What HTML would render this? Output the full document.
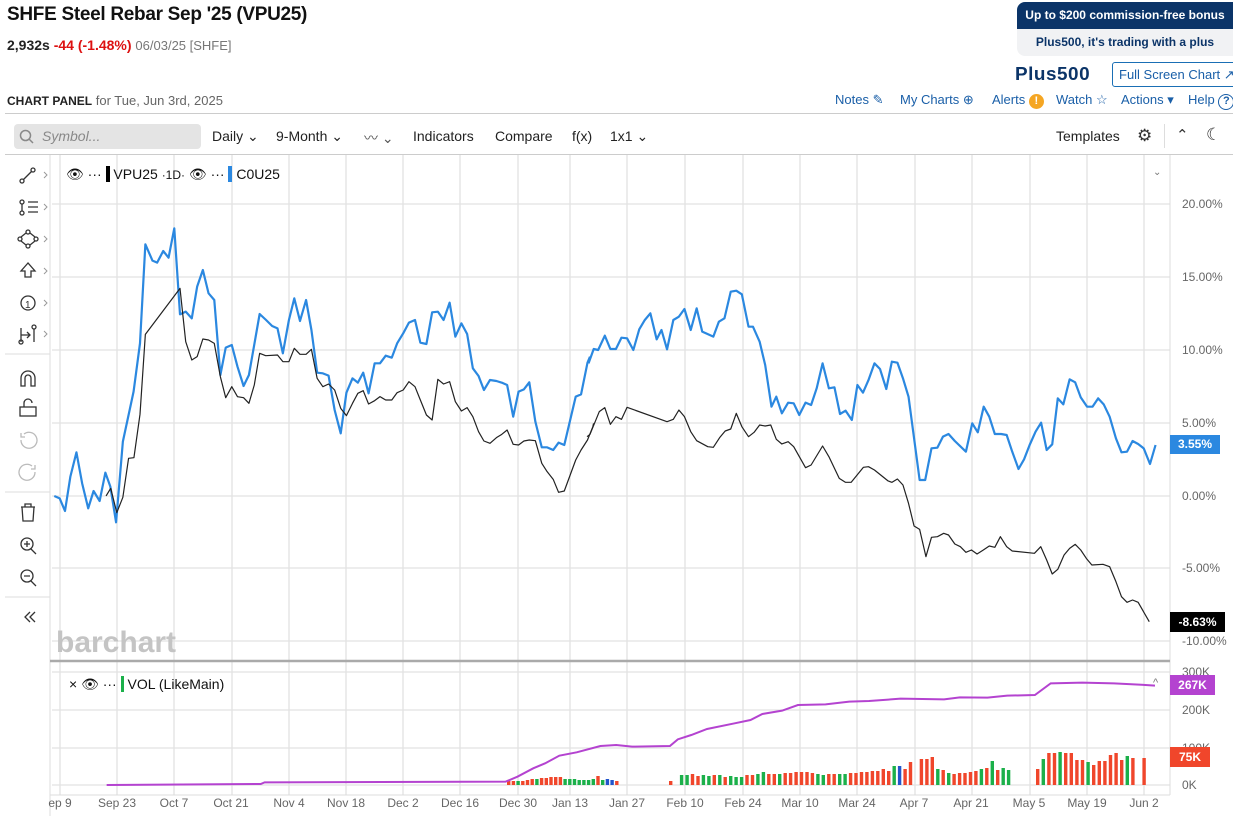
<!DOCTYPE html>
<html><head><meta charset="utf-8">
<style>
*{margin:0;padding:0;box-sizing:border-box}
body{width:1233px;height:816px;overflow:hidden;background:#fff;font-family:"Liberation Sans",Arial,sans-serif;color:#222;position:relative}
.a{position:absolute;white-space:nowrap}
.blue{color:#1a5fa8;font-size:13px;top:92px}
.ax{position:absolute;left:1182px;font-size:12px;color:#666}
.dl{position:absolute;top:796px;font-size:12px;color:#666;transform:translateX(-50%)}
</style></head><body>
<div class="a" style="left:7px;top:4px;font-size:19px;font-weight:bold;color:#111;letter-spacing:-0.3px">SHFE Steel Rebar Sep '25 (VPU25)</div>
<div class="a" style="left:7px;top:37px;font-size:14px"><b>2,932s</b> <b style="color:#d11">-44 (-1.48%)</b> <span style="color:#777;font-size:13px">06/03/25 [SHFE]</span></div>

<div class="a" style="left:1017px;top:2px;width:216px;height:27px;background:#0b3468;border-radius:8px 0 0 0;color:#fff;font-size:12px;font-weight:bold;text-align:center;line-height:27px">Up to $200 commission-free bonus</div>
<div class="a" style="left:1017px;top:29px;width:216px;height:27px;background:#f1f2f4;border-radius:0 0 0 8px;color:#0b3468;font-size:12px;font-weight:bold;text-align:center;line-height:27px">Plus500, it's trading with a plus</div>
<div class="a" style="left:1015px;top:64px;font-size:18px;font-weight:900;color:#0b3468;letter-spacing:0.5px;transform:scaleX(1.05);transform-origin:left">Plus500</div>
<div class="a" style="left:1112px;top:62px;width:125px;height:25px;border:1px solid #1a6fb5;border-radius:3px;color:#1a5fa8;font-size:13px;line-height:23px;padding-left:6px">Full Screen Chart ↗</div>

<div class="a" style="left:7px;top:93px;font-size:13px"><b style="font-size:12px">CHART PANEL</b> <span style="color:#666">for Tue, Jun 3rd, 2025</span></div>
<div class="a blue" style="left:835px">Notes ✎</div>
<div class="a blue" style="left:900px">My Charts ⊕</div>
<div class="a blue" style="left:992px">Alerts <span style="display:inline-block;width:15px;height:15px;border-radius:50%;background:#f5a623;color:#fff;font-size:11px;text-align:center;line-height:15px;font-weight:bold">!</span></div>
<div class="a blue" style="left:1056px">Watch ☆</div>
<div class="a blue" style="left:1121px">Actions ▾</div>
<div class="a blue" style="left:1188px">Help <span style="display:inline-block;width:16px;height:16px;border:1.5px solid #1a5fa8;border-radius:50%;font-size:11px;text-align:center;line-height:13px;font-weight:bold">?</span></div>
<div class="a" style="left:5px;top:113px;width:1228px;height:1px;background:#ccc"></div>

<div class="a" style="left:14px;top:124px;width:187px;height:25px;background:#e4e4e4;border-radius:4px;font-size:14px;color:#888;font-style:italic;line-height:25px;padding-left:28px">Symbol...</div>
<svg class="a" style="left:19px;top:129px" width="16" height="16"><circle cx="6.5" cy="6.5" r="5" fill="none" stroke="#888" stroke-width="1.5"/><line x1="10" y1="10" x2="14" y2="14" stroke="#888" stroke-width="1.5"/></svg>
<div class="a" style="left:212px;top:128px;font-size:14px;color:#222">Daily ⌄</div>
<div class="a" style="left:276px;top:128px;font-size:14px;color:#222">9-Month ⌄</div>
<div class="a" style="left:364px;top:128px;font-size:14px;color:#555">〰 ⌄</div>
<div class="a" style="left:413px;top:128px;font-size:14px;color:#222">Indicators</div>
<div class="a" style="left:495px;top:128px;font-size:14px;color:#222">Compare</div>
<div class="a" style="left:572px;top:128px;font-size:14px;color:#222">f(x)</div>
<div class="a" style="left:610px;top:128px;font-size:14px;color:#222">1x1 ⌄</div>
<div class="a" style="left:1056px;top:128px;font-size:14px">Templates</div>
<div class="a" style="left:1137px;top:126px;font-size:17px;color:#333">⚙</div>
<div class="a" style="left:1164px;top:124px;width:1px;height:24px;background:#ddd"></div>
<div class="a" style="left:1176px;top:126px;font-size:15px;color:#333">⌃</div>
<div class="a" style="left:1206px;top:125px;font-size:17px;color:#333">☾</div>
<div class="a" style="left:5px;top:154px;width:1228px;height:1px;background:#ccc"></div>

<svg class="a" style="left:0;top:0" width="1233" height="816">
<g stroke="#e2e2e2" stroke-width="1.3">
<line x1="60" y1="155" x2="60" y2="795"/><line x1="117" y1="155" x2="117" y2="795"/><line x1="174" y1="155" x2="174" y2="795"/><line x1="232" y1="155" x2="232" y2="795"/><line x1="289" y1="155" x2="289" y2="795"/><line x1="346" y1="155" x2="346" y2="795"/><line x1="403" y1="155" x2="403" y2="795"/><line x1="460" y1="155" x2="460" y2="795"/><line x1="518" y1="155" x2="518" y2="795"/><line x1="570" y1="155" x2="570" y2="795"/><line x1="627" y1="155" x2="627" y2="795"/><line x1="685" y1="155" x2="685" y2="795"/><line x1="743" y1="155" x2="743" y2="795"/><line x1="800" y1="155" x2="800" y2="795"/><line x1="857" y1="155" x2="857" y2="795"/><line x1="915" y1="155" x2="915" y2="795"/><line x1="972" y1="155" x2="972" y2="795"/><line x1="1030" y1="155" x2="1030" y2="795"/><line x1="1087" y1="155" x2="1087" y2="795"/><line x1="1144" y1="155" x2="1144" y2="795"/>
<line x1="52" y1="204" x2="1170" y2="204"/><line x1="52" y1="277" x2="1170" y2="277"/><line x1="52" y1="350" x2="1170" y2="350"/><line x1="52" y1="423" x2="1170" y2="423"/><line x1="52" y1="496" x2="1170" y2="496"/><line x1="52" y1="568" x2="1170" y2="568"/><line x1="52" y1="641" x2="1170" y2="641"/>
<line x1="52" y1="672" x2="1170" y2="672"/><line x1="52" y1="710" x2="1170" y2="710"/><line x1="52" y1="748" x2="1170" y2="748"/><line x1="52" y1="785" x2="1170" y2="785"/>
</g>
<line x1="1170" y1="155" x2="1170" y2="795" stroke="#ddd"/>
<line x1="50" y1="155" x2="50" y2="816" stroke="#ddd"/>
<line x1="50" y1="661" x2="1170" y2="661" stroke="#aaa" stroke-width="2.5"/>
<line x1="50" y1="795" x2="1170" y2="795" stroke="#ddd"/>
<g stroke="#ddd"><line x1="5" y1="354" x2="50" y2="354"/><line x1="5" y1="492" x2="50" y2="492"/><line x1="5" y1="597" x2="50" y2="597"/></g>
<text x="56" y="652" font-family="Liberation Sans" font-size="30" font-weight="bold" fill="#c4c4c4">barchart</text>

<g fill="none" stroke-linejoin="round">
<g transform="translate(40,210) scale(0.35714,0.33333)">
<polyline vector-effect="non-scaling-stroke" stroke="#2b88e0" stroke-width="2.2" points="40,858 55,865 70,903 85,800 102,727 118,820 135,895 150,843 167,873 183,788 197,830 213,937 232,695 262,545 280,400 295,103 315,152 328,158 345,123 360,143 376,55 392,313 408,305 425,325 440,230 456,180 472,250 488,270 505,495 520,413 537,405 553,470 570,528 585,495 615,312 633,330 650,348 665,355 680,430 697,330 712,265 728,333 745,270 760,360 776,488 792,490 808,497 825,600 842,670 858,548 875,505 890,518 905,488 920,550 937,460 952,460 968,437 985,443 1000,400 1017,370 1033,338 1050,330 1065,398 1082,402 1098,307 1114,305 1130,330 1147,278 1163,380 1180,340 1196,372 1212,475 1228,498 1243,540 1260,510 1278,513 1293,518 1308,525 1325,620 1340,545 1355,538 1370,517 1387,635 1405,712 1420,712 1437,720 1452,698 1468,705 1500,560 1515,553 1533,458 1540,440"/>
<polyline vector-effect="non-scaling-stroke" stroke="#222" stroke-width="1.2" points="185,858 198,835 215,908 232,862 248,745 263,743 280,613 295,373 392,235 408,395 425,450 440,440 456,387 472,390 488,400 505,500 520,563 537,530 553,560 570,563 585,580 600,525 615,430 632,437 665,435 680,455 697,455 712,415 728,433 745,433 760,418 776,505 792,530 808,522 825,540 842,595 858,617 875,580 890,550 905,542 920,582 937,572 952,560 968,570 985,570 1000,548 1017,540 1033,515 1050,530 1065,570 1082,615 1098,630 1114,508 1130,522 1147,515 1163,575 1180,603 1196,593 1212,620 1228,665 1243,693 1260,700 1278,683 1293,673 1308,660 1325,703 1340,705 1355,693 1370,690 1387,692 1405,760 1420,785 1437,808 1452,847 1468,843 1500,750 1515,720 1533,690 1548,650 1550,640"/>
</g>
<g transform="translate(590,270) scale(0.37037,0.33333)">
<polyline vector-effect="non-scaling-stroke" stroke="#2b88e0" stroke-width="2.2" points="-4,280 10,237 22,240 40,197 55,237 70,237 85,203 100,205 117,240 133,178 148,150 163,130 180,208 193,180 208,238 225,150 240,140 255,117 272,180 288,115 303,185 333,200 348,155 363,145 380,65 395,62 410,73 428,170 440,170 458,215 473,285 490,410 503,380 518,430 535,398 550,400 565,435 582,398 597,405 612,355 628,280 645,355 660,352 675,432 690,422 707,450 722,345 737,368 752,330 768,280 783,297 800,357 815,275 830,278 845,325 860,380 890,630 905,630 922,535 938,533 953,500 968,492 985,513 1015,545 1032,460 1047,487 1063,410 1078,440 1093,492 1110,492 1125,495 1140,545 1157,597 1172,568 1187,525 1203,485 1218,458 1233,540 1248,523 1263,385 1278,403 1295,328 1310,337 1325,382 1342,410 1357,410 1372,385 1387,403 1403,440 1420,505 1435,547 1450,545 1465,513 1480,522 1495,535 1512,582 1527,525"/>
<polyline vector-effect="non-scaling-stroke" stroke="#222" stroke-width="1.2" points="-8,500 0,493 25,425 40,413 55,463 70,440 85,448 100,412 208,455 225,448 240,420 255,440 272,485 288,512 318,530 333,532 350,503 365,483 380,477 395,430 410,470 428,500 443,487 458,465 473,468 488,465 503,508 518,522 535,515 550,530 582,593 597,585 628,528 645,560 673,625 690,637 705,637 738,592 752,590 768,600 805,633 815,637 830,627 845,645 860,700 875,768 890,778 907,860 922,802 938,800 955,790 968,795 985,822 1000,830 1015,847 1030,840 1045,852 1062,840 1078,828 1093,832 1108,800 1125,830 1140,843 1200,850 1217,830 1233,870 1248,912 1263,898 1280,855 1295,835 1310,823 1325,840 1340,865 1355,885 1385,883 1403,890 1420,935 1435,980 1450,997 1465,990 1480,997 1510,1055"/>
</g>
</g>
<g id="bars"></g>
<g transform="translate(0,640) scale(0.79,0.33333)" fill="none">
<polyline vector-effect="non-scaling-stroke" stroke="#b443d0" stroke-width="2" points="135,435 330,432 335,427 640,425 655,410 675,385 690,370 708,347 730,337 760,318 780,315 800,320 848,318 858,298 875,285 895,267 930,250 950,240 965,222 990,212 1010,195 1045,193 1075,185 1100,183 1140,176 1195,178 1215,172 1250,173 1275,167 1310,165 1330,130 1370,128 1410,130 1450,135 1462,137"/>
</g>

<g fill="none" stroke="#333" stroke-width="1.3">
<circle cx="22" cy="181" r="2"/><circle cx="33" cy="170" r="2"/><line x1="23.5" y1="179.5" x2="31.5" y2="171.5"/>
<circle cx="22" cy="202" r="2"/><circle cx="22" cy="213" r="2"/><path d="M22 204v7"/><path d="M28 202h10M28 207h10M28 212h10"/>
<circle cx="28" cy="232" r="2"/><circle cx="28" cy="246" r="2"/><circle cx="20" cy="239" r="2"/><circle cx="36" cy="239" r="2"/><path d="M21 237l5-4M30 233l5 4M35 241l-5 4M26 245l-5-4"/>
<path d="M28 263l-7 8h4v6h6v-6h4z"/>
<circle cx="28" cy="303" r="7"/>
<path d="M21 328v14M21 335h9M27 332l3 3-3 3"/><circle cx="21" cy="342" r="2"/><circle cx="34" cy="327" r="2"/><path d="M34 329v13"/>
<path d="M21 386v-8a7 7 0 0 1 14 0v8h-4v-8a3 3 0 0 0-6 0v8z"/>
<rect x="20" y="407" width="16" height="9"/><path d="M24 407v-4a4 4 0 0 1 8 0"/>
<g stroke="#bbb"><path d="M21 440a8 8 0 1 0 3-6M21 433v4h4"/><path d="M35 472a8 8 0 1 1-3-6M35 465v4h-4"/></g>
<path d="M21 507h14M25 507v-3h6v3M22 507l1 14h10l1-14"/>
<circle cx="27" cy="544" r="6"/><path d="M31 549l5 5M24 544h6M27 541v6"/>
<circle cx="27" cy="576" r="6"/><path d="M31 581l5 5M24 576h6"/>
<path d="M30 612l-5 5 5 5M35 612l-5 5 5 5"/>
</g>
<g fill="none" stroke="#999" stroke-width="1"><path d="M44 172l3 3-3 3M44 204l3 3-3 3M44 236l3 3-3 3M44 268l3 3-3 3M44 300l3 3-3 3M44 331l3 3-3 3"/></g>
<text x="25" y="308" font-family="Liberation Sans" font-size="10" fill="#333">1</text>
</svg>

<div class="a" style="left:66px;top:166px;font-size:14px;color:#111">👁 ··· <span style="display:inline-block;width:4px;height:16px;background:#000;vertical-align:-3px"></span> VPU25 <span style="font-size:12px">·1D·</span> 👁 ··· <span style="display:inline-block;width:4px;height:16px;background:#2b88e0;vertical-align:-3px"></span> C0U25</div>
<div class="a" style="left:1153px;top:167px;font-size:10px;color:#777">⌄</div>
<div class="a" style="left:69px;top:676px;font-size:14px;color:#111">× 👁 ··· <span style="display:inline-block;width:3px;height:16px;background:#1bb04a;vertical-align:-3px"></span> VOL (LikeMain)</div>
<div class="a" style="left:1153px;top:677px;font-size:11px;color:#777">^</div>

<div class="ax" style="top:197px">20.00%</div>
<div class="ax" style="top:270px">15.00%</div>
<div class="ax" style="top:343px">10.00%</div>
<div class="ax" style="top:416px">5.00%</div>
<div class="ax" style="top:489px">0.00%</div>
<div class="ax" style="top:561px">-5.00%</div>
<div class="ax" style="top:634px">-10.00%</div>
<div class="ax" style="top:665px">300K</div>
<div class="ax" style="top:703px">200K</div>
<div class="ax" style="top:741px">100K</div>
<div class="ax" style="top:778px">0K</div>
<div class="a" style="left:1170px;top:435px;width:50px;height:19px;background:#2b88e0;color:#fff;font-size:12px;font-weight:bold;line-height:19px;text-align:center">3.55%</div>
<div class="a" style="left:1170px;top:612px;width:55px;height:20px;background:#000;color:#fff;font-size:12px;font-weight:bold;line-height:20px;text-align:center">-8.63%</div>
<div class="a" style="left:1170px;top:675px;width:45px;height:20px;background:#b443d0;color:#fff;font-size:12px;font-weight:bold;line-height:20px;text-align:center">267K</div>
<div class="a" style="left:1170px;top:747px;width:40px;height:20px;background:#f0462b;color:#fff;font-size:12px;font-weight:bold;line-height:20px;text-align:center">75K</div>

<div class="dl" style="left:60px">ep 9</div><div class="dl" style="left:117px">Sep 23</div><div class="dl" style="left:174px">Oct 7</div><div class="dl" style="left:231px">Oct 21</div><div class="dl" style="left:289px">Nov 4</div><div class="dl" style="left:346px">Nov 18</div><div class="dl" style="left:403px">Dec 2</div><div class="dl" style="left:460px">Dec 16</div><div class="dl" style="left:518px">Dec 30</div><div class="dl" style="left:570px">Jan 13</div><div class="dl" style="left:627px">Jan 27</div><div class="dl" style="left:685px">Feb 10</div><div class="dl" style="left:743px">Feb 24</div><div class="dl" style="left:800px">Mar 10</div><div class="dl" style="left:857px">Mar 24</div><div class="dl" style="left:914px">Apr 7</div><div class="dl" style="left:971px">Apr 21</div><div class="dl" style="left:1029px">May 5</div><div class="dl" style="left:1087px">May 19</div><div class="dl" style="left:1144px">Jun 2</div>

<script>
(function(){
var g=document.getElementById('bars'),s='';
function bar(x,h,c){s+='<rect x="'+x.toFixed(1)+'" y="'+(785-h)+'" width="3.4" height="'+h+'" fill="'+c+'"/>';}
var R='#f0462b',G='#1bb04a',B='#2255cc';
var A=[[4,R],[4,R],[4,G],[4,R],[5,R],[6,R],[6,G],[7,R],[7,R],[8,R],[8,R],[8,R],[6,G],[6,G],[6,G],[5,G],[5,G],[5,G],[6,G],[9,R],[5,G],[6,B],[5,B],[4,R]];
var x=507;A.forEach(function(b){bar(x,b[0],b[1]);x+=4.7;});
var Bh=[[4,R],[0,R],[10,G],[10,G],[11,R],[9,R],[10,G],[9,G],[10,R],[10,G],[8,R],[9,G],[8,G],[8,G],[10,R],[10,R],[11,G],[13,G],[11,R],[11,R],[11,G],[12,R],[12,R],[13,R],[13,R],[13,R],[12,R],[11,G],[10,G],[11,R],[11,R],[11,G],[11,G],[12,R],[12,R],[13,R],[13,R],[14,R],[14,R],[16,R],[14,R],[19,G],[19,B],[16,R],[23,R],[0,R],[26,R],[26,R],[28,R],[16,G],[15,R],[12,G],[11,R],[12,R],[12,R],[13,R],[14,R],[16,G],[17,R],[24,G],[15,R],[17,G],[15,G]];
x=669;Bh.forEach(function(b){if(b[0])bar(x,b[0],b[1]);x+=5.45;});
var C=[[16,R],[26,G],[32,R],[32,R],[33,G],[32,R],[32,R],[25,R],[25,R],[23,G],[20,R],[24,R],[24,R],[30,R],[32,R],[25,R],[29,G],[27,R],[0,R],[27,R]];
x=1036;C.forEach(function(b){if(b[0])bar(x,b[0],b[1]);x+=5.6;});
g.innerHTML=s;
})();
</script>
</body></html>
